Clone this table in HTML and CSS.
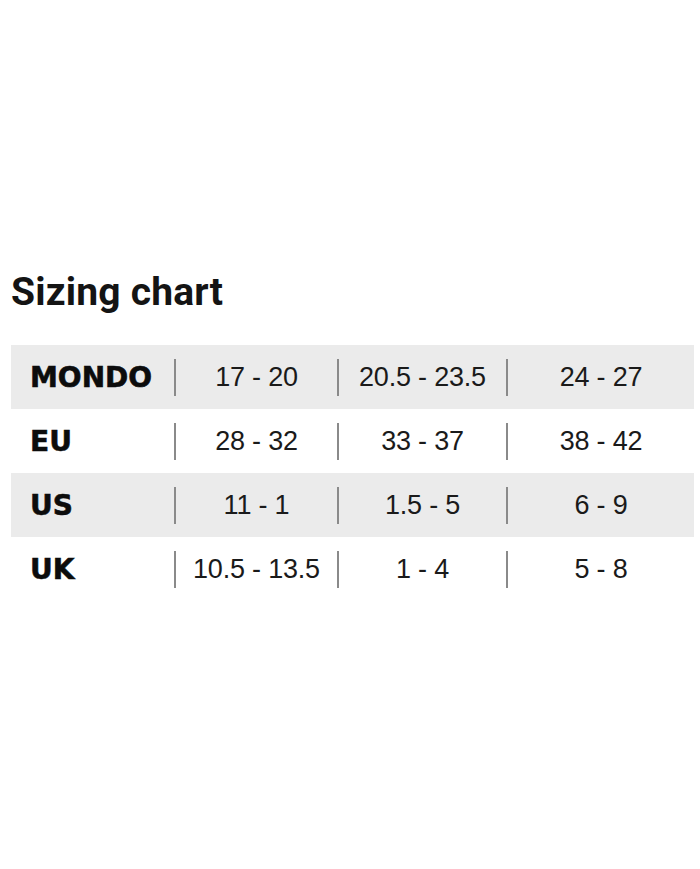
FILE: index.html
```html
<!DOCTYPE html>
<html>
<head>
<meta charset="utf-8">
<link rel="stylesheet" href="styles.css">
</head>
<body>
<main class="page">
  <h1 class="title">Sizing chart</h1>
  <div class="chart">
    <div class="row shaded">
      <div class="label">MONDO</div>
      <div class="val"><span>17 - 20</span></div>
      <div class="val"><span>20.5 - 23.5</span></div>
      <div class="val"><span>24 - 27</span></div>
    </div>
    <div class="row">
      <div class="label">EU</div>
      <div class="val"><span>28 - 32</span></div>
      <div class="val"><span>33 - 37</span></div>
      <div class="val"><span>38 - 42</span></div>
    </div>
    <div class="row shaded">
      <div class="label">US</div>
      <div class="val"><span>11 - 1</span></div>
      <div class="val"><span>1.5 - 5</span></div>
      <div class="val"><span>6 - 9</span></div>
    </div>
    <div class="row">
      <div class="label">UK</div>
      <div class="val"><span>10.5 - 13.5</span></div>
      <div class="val"><span>1 - 4</span></div>
      <div class="val"><span>5 - 8</span></div>
    </div>
  </div>
</main>
</body>
</html>
```
FILE: styles.css
```css
html, body {
  margin: 0;
  padding: 0;
  background: #ffffff;
}
.page {
  padding: 0 6px 0 11px;
  font-family: Roboto, "Liberation Sans", sans-serif;
  color: #111;
}
.title {
  margin: 0;
  padding-top: 270px;
  font-size: 39px;
  line-height: 44px;
  font-weight: 700;
  letter-spacing: 0.2px;
  color: #141414;
}
.chart {
  margin-top: 31px;
  width: 683px;
}
.row {
  display: grid;
  grid-template-columns: 163px 163px 169px 188px;
  height: 64px;
  align-items: center;
}
.row.shaded {
  background: #ebebeb;
}
.label {
  padding-left: 19px;
  font-family: "DejaVu Sans", "Liberation Sans", sans-serif;
  font-size: 28px;
  font-weight: 700;
  color: #0c0c0c;
  -webkit-text-stroke: 0.6px #0c0c0c;
}
.val {
  display: flex;
  align-items: center;
  height: 100%;
}
.val::before {
  content: "";
  width: 2px;
  height: 37px;
  background: #8a8a8a;
  flex: none;
}
.val span {
  flex: 1;
  text-align: center;
  font-family: "Liberation Sans", Arial, sans-serif;
  font-size: 27px;
  font-weight: 400;
  letter-spacing: -0.2px;
  color: #1a1a1a;
}
```
